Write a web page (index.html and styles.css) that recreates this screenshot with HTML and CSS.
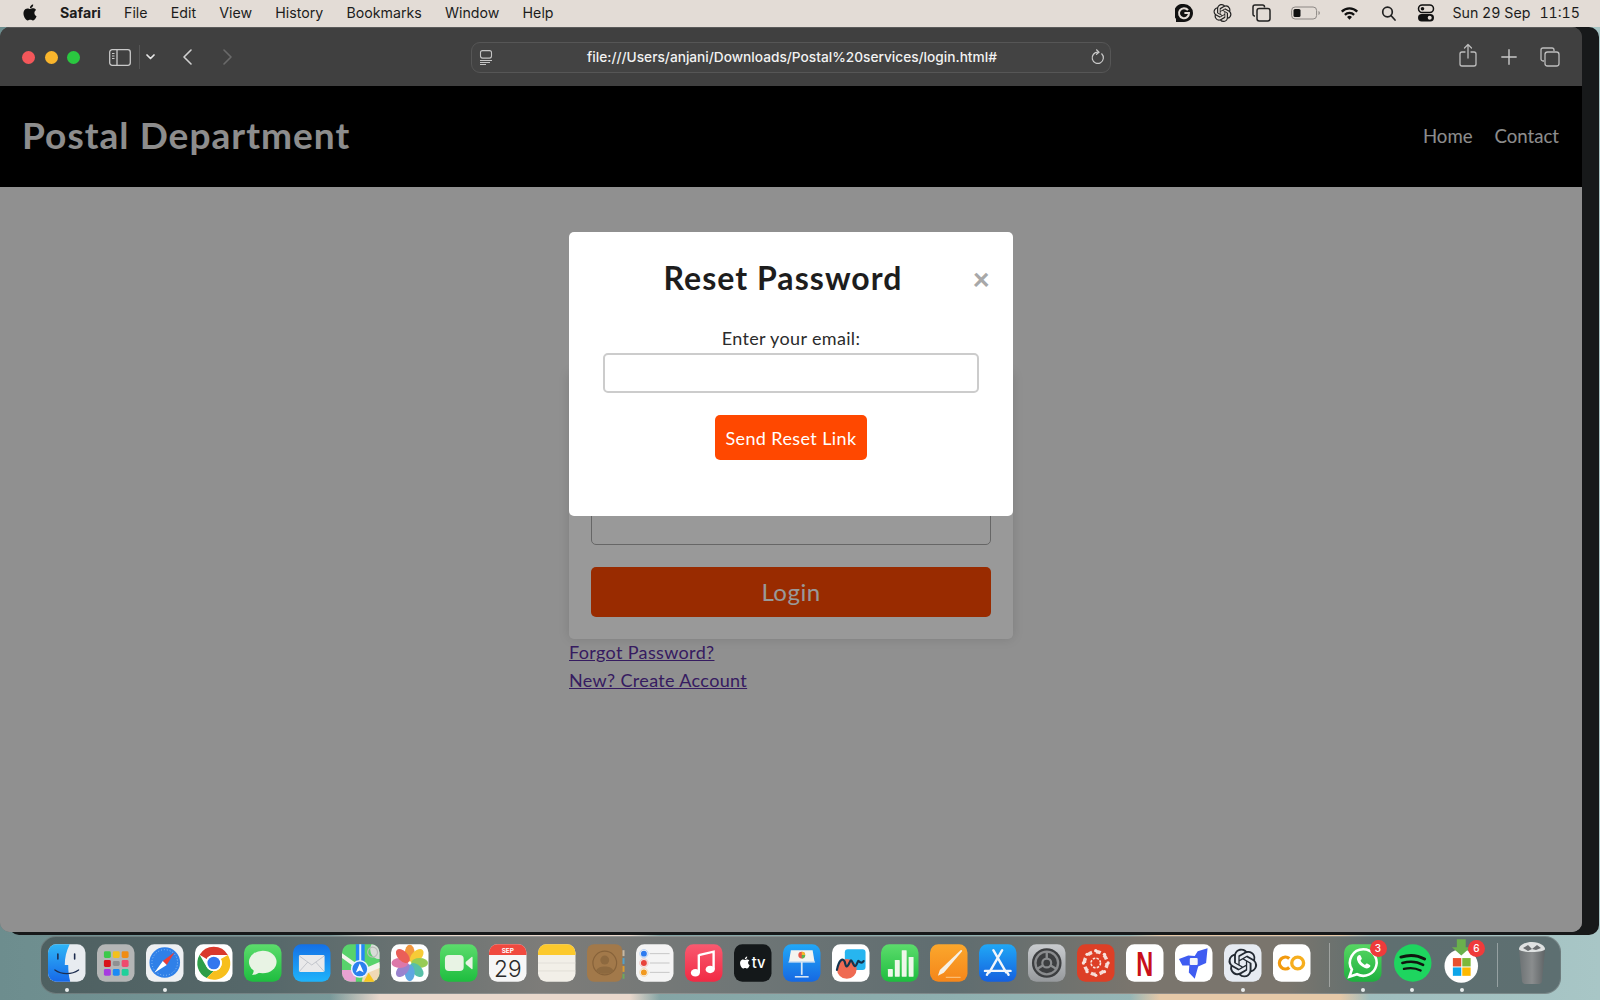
FILE: index.html
```html
<!DOCTYPE html>
<html lang="en">
<head>
<meta charset="utf-8">
<title>Postal Department</title>
<link rel="stylesheet" href="styles.css">
</head>
<body>
<div class="menubar">
  <svg class="apple" viewBox="0 0 24 24"><path d="M12.152 6.896c-.948 0-2.415-1.078-3.96-1.04-2.04.027-3.91 1.183-4.961 3.014-2.117 3.675-.546 9.103 1.519 12.09 1.013 1.454 2.208 3.09 3.792 3.039 1.52-.065 2.09-.987 3.935-.987 1.831 0 2.35.987 3.96.948 1.637-.026 2.676-1.48 3.676-2.948 1.156-1.688 1.636-3.325 1.662-3.415-.039-.013-3.182-1.221-3.22-4.857-.026-3.04 2.48-4.494 2.597-4.559-1.429-2.09-3.623-2.324-4.39-2.376-2-.156-3.675 1.09-4.61 1.09zM15.53 3.83c.843-1.012 1.4-2.427 1.245-3.83-1.207.052-2.662.805-3.532 1.818-.78.896-1.454 2.338-1.273 3.714 1.338.104 2.715-.688 3.559-1.701"/></svg>
  <nav class="menu">
    <span class="menu-app">Safari</span><span>File</span><span>Edit</span><span>View</span><span>History</span><span>Bookmarks</span><span>Window</span><span>Help</span>
  </nav>
  <div class="status">
    <svg class="st st-18" viewBox="0 0 18 18"><path d="M9 0a9 9 0 0 1 9 9c0 5-4 9-9 9H1v-3.2A9 9 0 0 1 9 0z" fill="#111"/><path d="M13 6.2A5 5 0 1 0 14 9H9.4" fill="none" stroke="#e3dcd6" stroke-width="2"/></svg>
    <svg class="st st-19" viewBox="0 0 24 24"><path fill="#222" d="M22.2819 9.8211a5.9847 5.9847 0 0 0-.5157-4.9108 6.0462 6.0462 0 0 0-6.5098-2.9A6.0651 6.0651 0 0 0 4.9807 4.1818a5.9847 5.9847 0 0 0-3.9977 2.9 6.0462 6.0462 0 0 0 .7427 7.0966 5.98 5.98 0 0 0 .511 4.9107 6.051 6.051 0 0 0 6.5146 2.9001A5.9847 5.9847 0 0 0 13.2599 24a6.0557 6.0557 0 0 0 5.7718-4.2058 5.9894 5.9894 0 0 0 3.9977-2.9001 6.0557 6.0557 0 0 0-.7475-7.0729zm-9.022 12.6081a4.4755 4.4755 0 0 1-2.8764-1.0408l.1419-.0804 4.7783-2.7582a.7948.7948 0 0 0 .3927-.6813v-6.7369l2.02 1.1686a.071.071 0 0 1 .038.052v5.5826a4.504 4.504 0 0 1-4.4945 4.4944zm-9.6607-4.1254a4.4708 4.4708 0 0 1-.5346-3.0137l.142.0852 4.783 2.7582a.7712.7712 0 0 0 .7806 0l5.8428-3.3685v2.3324a.0804.0804 0 0 1-.0332.0615L9.74 19.9502a4.4992 4.4992 0 0 1-6.1408-1.6464zM2.3408 7.8956a4.485 4.485 0 0 1 2.3655-1.9728V11.6a.7664.7664 0 0 0 .3879.6765l5.8144 3.3543-2.0201 1.1685a.0757.0757 0 0 1-.071 0l-4.8303-2.7865A4.504 4.504 0 0 1 2.3408 7.872zm16.5963 3.8558L13.1038 8.364 15.1192 7.2a.0757.0757 0 0 1 .071 0l4.8303 2.7913a4.4944 4.4944 0 0 1-.6765 8.1042v-5.6772a.79.79 0 0 0-.407-.667zm2.0107-3.0231l-.142-.0852-4.7735-2.7818a.7759.7759 0 0 0-.7854 0L9.409 9.2297V6.8974a.0662.0662 0 0 1 .0284-.0615l4.8303-2.7866a4.4992 4.4992 0 0 1 6.6802 4.66zM8.3065 12.863l-2.02-1.1638a.0804.0804 0 0 1-.038-.0567V6.0742a4.4992 4.4992 0 0 1 7.3757-3.4537l-.142.0805L8.704 5.459a.7948.7948 0 0 0-.3927.6813zm1.0976-2.3654l2.602-1.4998 2.6069 1.4998v2.9994l-2.5974 1.4997-2.6067-1.4997Z"/></svg>
    <svg class="st st-19" viewBox="0 0 19 18" fill="none" stroke="#222" stroke-width="1.5"><path d="M3 12H2.500A1.700 1.700 0 0 1 1 10.300V3a2 2 0 0 1 2-2h7.500A2 2 0 0 1 12.500 3v.5"/><rect x="5" y="4.500" width="13" height="12.500" rx="2.200"/></svg>
    <svg class="st st-29" viewBox="0 0 29 14"><rect x=".6" y="1" width="25" height="12" rx="3.500" fill="none" stroke="#8c8784" stroke-width="1"/><rect x="2.500" y="3" width="7" height="8" rx="1.500" fill="#111"/><path d="M27.500 5v4c.8-.3 1.300-1 1.300-2s-.5-1.700-1.300-2z" fill="#8c8784"/></svg>
    <svg class="st st-19" viewBox="0 0 20 15"><path d="M1 5.200a12.700 12.700 0 0 1 18 0l-1.700 1.800a10.200 10.200 0 0 0-14.600 0zM4.300 8.600a8 8 0 0 1 11.400 0L14 10.300a5.600 5.600 0 0 0-8 0zM7.400 11.800a3.700 3.700 0 0 1 5.200 0L10 14.500z" fill="#111"/></svg>
    <svg class="st st-18" viewBox="0 0 18 18" fill="none" stroke="#222" stroke-width="1.700"><circle cx="8.500" cy="8" r="4.800"/><path d="M12 11.500l4 4.500" stroke-linecap="round"/></svg>
    <svg class="st st-18" viewBox="0 0 18 18"><rect x="1.500" y="1" width="15" height="7.500" rx="3.700" fill="none" stroke="#111" stroke-width="1.500"/><circle cx="5.500" cy="4.700" r="1.800" fill="#111"/><rect x="1" y="10" width="16" height="7.500" rx="3.700" fill="#111"/><circle cx="12.700" cy="13.700" r="2" fill="#e3dcd6"/></svg>
    <div class="clock"><span>Sun 29 Sep</span><span>11:15</span></div>
  </div>
</div>

<div class="desktop">
  <div class="back-window"></div>
  <div class="window">
    <div class="toolbar">
      <div class="tb-left">
        <i class="light red"></i><i class="light yellow"></i><i class="light green"></i>
        <svg class="tb-sidebar" viewBox="0 0 22 17" fill="none" stroke="#c9c9c9" stroke-width="1.300"><rect x=".7" y=".7" width="20.600" height="15.600" rx="2.500"/><path d="M8 .7v15.600"/><path d="M3 4.500h2.500M3 7h2.500M3 9.500h2.500" stroke-width="1"/></svg>
        <i class="tb-divider"></i>
        <svg class="tb-chevron" viewBox="0 0 9 6" fill="none" stroke="#e8e8e8" stroke-width="1.700" stroke-linecap="round" stroke-linejoin="round"><path d="M1 1l3.500 3.500L8 1"/></svg>
        <svg class="tb-back" viewBox="0 0 10 16" fill="none" stroke="#d0d0d0" stroke-width="1.600" stroke-linecap="round" stroke-linejoin="round"><path d="M9 1L2 8l7 7"/></svg>
        <svg class="tb-forward" viewBox="0 0 10 16" fill="none" stroke="#6a6a6a" stroke-width="1.600" stroke-linecap="round" stroke-linejoin="round"><path d="M1 1l7 7-7 7"/></svg>
      </div>
      <div class="address">
        <svg class="addr-page" viewBox="0 0 14 15" fill="none" stroke="#c4c4c4" stroke-width="1.100"><rect x="1.500" y=".6" width="11" height="7.500" rx="2"/><path d="M1 10.500h12M1 12.500h10M1 14.500h6"/></svg>
        <span class="addr-url">file:///Users/anjani/Downloads/Postal%20services/login.html#</span>
        <svg class="addr-reload" viewBox="0 0 14 16" fill="none" stroke="#c9c9c9" stroke-width="1.200" stroke-linecap="round"><path d="M10.700 4.800A5.600 5.600 0 1 1 7 3.200"/><path d="M5.500 .8L8 3.200 5.500 5.300"/></svg>
      </div>
      <div class="tb-right">
        <svg class="tb-share" viewBox="0 0 18 24" fill="none" stroke="#bdbdbd" stroke-width="1.300" stroke-linecap="round" stroke-linejoin="round"><path d="M9 15V1.500M5.500 5L9 1.500 12.500 5"/><path d="M6 9H3a2 2 0 0 0-2 2v10a2 2 0 0 0 2 2h12a2 2 0 0 0 2-2V11a2 2 0 0 0-2-2h-3"/></svg>
        <svg class="tb-plus" viewBox="0 0 16 16" stroke="#c9c9c9" stroke-width="1.400" stroke-linecap="round"><path d="M8 .8v14.400M.8 8h14.400"/></svg>
        <svg class="tb-tabs" viewBox="0 0 20 20" fill="none" stroke="#bdbdbd" stroke-width="1.300"><path d="M4 14H3a2 2 0 0 1-2-2V3a2 2 0 0 1 2-2h9a2 2 0 0 1 2 2v1"/><rect x="5" y="5" width="14" height="14" rx="2.500"/></svg>
      </div>
    </div>

    <div class="page">
      <header class="site-header">
        <a class="brand">Postal Department</a>
        <nav class="site-nav"><a>Home</a><a>Contact</a></nav>
      </header>
      <main class="site-main">
        <form class="login-card">
          <div class="field"><label>Username</label><input class="login-input" type="text"></div>
          <div class="field"><label>Password</label><input class="login-input" type="password"></div>
          <button class="login-btn" type="button">Login</button>
        </form>
        <div class="links">
          <a href="#">Forgot Password?</a>
          <a href="#">New? Create Account</a>
        </div>
      </main>
      <div class="overlay">
        <div class="modal">
          <div class="modal-head">
            <h2>Reset Password</h2>
            <span class="modal-close">×</span>
          </div>
          <label class="modal-label">Enter your email:</label>
          <input class="modal-input" type="email">
          <button class="modal-btn" type="button">Send Reset Link</button>
        </div>
      </div>
    </div>
  </div>

  <div class="dock">
    <!-- Finder -->
    <div class="app running"><svg viewBox="0 0 38 38"><defs><linearGradient id="fb" x1="0" y1="0" x2="0" y2="1"><stop offset="0" stop-color="#2fb6f7"/><stop offset="1" stop-color="#1668e8"/></linearGradient></defs><rect width="38" height="38" rx="8.500" fill="#e8ecf0"/><path d="M8.500 0H22c-3.500 7-5 14-5 21h3.500c0 6 .5 11 2 17H8.500A8.500 8.500 0 0 1 0 29.500v-21A8.500 8.500 0 0 1 8.500 0z" fill="url(#fb)"/><path d="M10 10v5M27 10v5" stroke="#1d2d4f" stroke-width="1.600" stroke-linecap="round"/><path d="M7 26c7 5 17 5 24 0" fill="none" stroke="#1d2d4f" stroke-width="1.300" stroke-linecap="round"/></svg></div>
    <!-- Launchpad -->
    <div class="app"><svg viewBox="0 0 38 38"><rect width="38" height="38" rx="8.500" fill="#b4b6b6"/><g><rect x="7" y="7" width="7" height="7" rx="1.500" fill="#3bc94a"/><rect x="16" y="7" width="7" height="7" rx="1.500" fill="#f3c01c"/><rect x="25" y="7" width="7" height="7" rx="1.500" fill="#ef8c14"/><rect x="7" y="16" width="7" height="7" rx="1.500" fill="#d8121a"/><rect x="16" y="17" width="7" height="5" rx="1.500" fill="#8f9092"/><rect x="25" y="16" width="7" height="7" rx="1.500" fill="#ee4a6e"/><rect x="7" y="25" width="7" height="7" rx="1.500" fill="#a63be0"/><rect x="16" y="25" width="7" height="7" rx="1.500" fill="#1b8af5"/><rect x="25" y="25" width="7" height="7" rx="1.500" fill="#1fd09a"/></g></svg></div>
    <!-- Safari -->
    <div class="app running"><svg viewBox="0 0 38 38"><rect width="38" height="38" rx="8.500" fill="#eef0f2"/><circle cx="19" cy="18.500" r="15.500" fill="#2f80e8"/><circle cx="19" cy="18.500" r="13" fill="none" stroke="#8fc0f5" stroke-width="1" stroke-dasharray="1 2"/><path d="M29 8L21 21l-4-4z" fill="#ee3c35"/><path d="M8.500 29L17 17l4 4z" fill="#fff"/></svg></div>
    <!-- Chrome -->
    <div class="app"><svg viewBox="0 0 38 38"><rect width="38" height="38" rx="8.500" fill="#fff"/><path d="M19 2.500a16.500 16.500 0 0 1 14.300 8.300H19A8.200 8.200 0 0 0 11.800 15L4.700 10.700A16.500 16.500 0 0 1 19 2.500z" fill="#d9392c"/><path d="M4.700 10.700l7.100 12.400A8.200 8.200 0 0 0 19 27.200l-7.200 7A16.500 16.500 0 0 1 4.700 10.700z" fill="#2e9e48"/><path d="M33.300 10.800A16.500 16.500 0 0 1 11.800 34.200l7.200-7a8.200 8.200 0 0 0 7.200-12.200z" fill="#f7bf1c"/><circle cx="19" cy="19" r="8.200" fill="#fff"/><circle cx="19" cy="19" r="6.400" fill="#3477ee"/></svg></div>
    <!-- Messages -->
    <div class="app"><svg viewBox="0 0 38 38"><defs><linearGradient id="gm" x1="0" y1="0" x2="0" y2="1"><stop offset="0" stop-color="#5cdc6c"/><stop offset="1" stop-color="#1ebd3f"/></linearGradient></defs><rect width="38" height="38" rx="8.500" fill="url(#gm)"/><ellipse cx="19" cy="18" rx="14" ry="11.500" fill="#e8f3e4"/><path d="M10 25c0 3-1 5-2 6 3 0 6-1 8-3z" fill="#e8f3e4"/></svg></div>
    <!-- Mail -->
    <div class="app"><svg viewBox="0 0 38 38"><defs><linearGradient id="bm" x1="0" y1="0" x2="0" y2="1"><stop offset="0" stop-color="#1470e6"/><stop offset="1" stop-color="#1fb4fb"/></linearGradient></defs><rect width="38" height="38" rx="8.500" fill="url(#bm)"/><rect x="6" y="11" width="26" height="17" rx="1.500" fill="#e9e9ea"/><path d="M6.500 12L19 21l12.500-9M6.500 27.500L15 18M31.500 27.500L23 18" fill="none" stroke="#b8bcc4" stroke-width=".8"/></svg></div>
    <!-- Maps -->
    <div class="app"><svg viewBox="0 0 38 38"><rect width="38" height="38" rx="8.500" fill="#58d36c"/><path d="M0 26l14 0 0 12H8.500A8.500 8.500 0 0 1 0 29.500z" fill="#e9a2d1"/><path d="M22 28l16-8v9.500A8.500 8.500 0 0 1 29.500 38H20z" fill="#f0d9b5"/><path d="M22 38l5-9 6 9z" fill="#f7c61f"/><path d="M30 0a8.500 8.500 0 0 1 8 8.500V15c-4 0-8-3-9-7s0-6 1-8z" fill="#d9dcd8"/><circle cx="31" cy="8" r="5" fill="none" stroke="#b9bcb8" stroke-width="1.200"/><path d="M14 0h9v20h-9z" fill="#2687f5"/><path d="M17.500 0h2v20h-2z" fill="#eaf3ff"/><path d="M0 9l14 10v5L0 14zM38 18l-14 6v6l14-6z" fill="#f4f4ee"/><circle cx="18" cy="25" r="9" fill="#eaf3ff"/><circle cx="18" cy="25" r="7.500" fill="#2b80ee"/><path d="M18 19.500l4 9-4-1.800-4 1.800z" fill="#fff"/></svg></div>
    <!-- Photos -->
    <div class="app"><svg viewBox="0 0 38 38"><rect width="38" height="38" rx="8.500" fill="#fff"/><g transform="translate(19 19)" opacity=".88"><ellipse cy="-10" rx="5" ry="8.500" fill="#f28a24"/><ellipse cy="-10" rx="5" ry="8.500" fill="#f6c41c" transform="rotate(45)"/><ellipse cy="-10" rx="5" ry="8.500" fill="#8ac63e" transform="rotate(90)"/><ellipse cy="-10" rx="5" ry="8.500" fill="#42b89c" transform="rotate(135)"/><ellipse cy="-10" rx="5" ry="8.500" fill="#4a9ade" transform="rotate(180)"/><ellipse cy="-10" rx="5" ry="8.500" fill="#8c72c8" transform="rotate(225)"/><ellipse cy="-10" rx="5" ry="8.500" fill="#d9669e" transform="rotate(270)"/><ellipse cy="-10" rx="5" ry="8.500" fill="#e84a42" transform="rotate(315)"/></g></svg></div>
    <!-- FaceTime -->
    <div class="app"><svg viewBox="0 0 38 38"><rect width="38" height="38" rx="8.500" fill="url(#gm)"/><rect x="5" y="11" width="19" height="16" rx="4" fill="#e8f3e4"/><path d="M26 18l6-5c.6-.5 1-.2 1 .5v11c0 .7-.4 1-1 .5l-6-5z" fill="#e8f3e4"/></svg></div>
    <!-- Calendar -->
    <div class="app"><svg viewBox="0 0 38 38"><rect width="38" height="38" rx="8.500" fill="#f6f6f6"/><path d="M8.500 0h21A8.500 8.500 0 0 1 38 8.500V11H0V8.500A8.500 8.500 0 0 1 8.500 0z" fill="#f0493f"/><text x="19" y="8.600" class="cal-mon">SEP</text><text x="19" y="33" class="cal-day">29</text></svg></div>
    <!-- Notes -->
    <div class="app"><svg viewBox="0 0 38 38"><rect width="38" height="38" rx="8.500" fill="#f2efe8"/><path d="M8.500 0h21A8.500 8.500 0 0 1 38 8.500V11H0V8.500A8.500 8.500 0 0 1 8.500 0z" fill="#fcc92c"/><path d="M0 19h38M0 27h38" stroke="#dcd9d2" stroke-width=".7"/></svg></div>
    <!-- Contacts -->
    <div class="app"><svg viewBox="0 0 38 38"><rect width="36" height="38" rx="7" fill="#a2794a"/><rect x="36" y="6" width="2" height="6" fill="#c9b9a2"/><rect x="36" y="14" width="2" height="6" fill="#55a0c8"/><rect x="36" y="22" width="2" height="6" fill="#dd9a2c"/><rect x="36" y="30" width="2" height="5" fill="#6fa85c"/><circle cx="18" cy="19" r="12" fill="none" stroke="#86623a" stroke-width="1.200"/><circle cx="18" cy="16" r="4.500" fill="#8d693f"/><path d="M9 27c2-6 16-6 18 0-5 4-13 4-18 0z" fill="#8d693f"/></svg></div>
    <!-- Reminders -->
    <div class="app"><svg viewBox="0 0 38 38"><rect width="38" height="38" rx="8.500" fill="#f4f4f4"/><circle cx="8" cy="9.500" r="3" fill="#2e7cf0"/><circle cx="8" cy="19" r="3" fill="#e8433a"/><circle cx="8" cy="28.500" r="3" fill="#f29a1f"/><circle cx="8" cy="9.500" r="4.200" fill="none" stroke="#a9c6f0" stroke-width=".7"/><circle cx="8" cy="19" r="4.200" fill="none" stroke="#eeb0ac" stroke-width=".7"/><circle cx="8" cy="28.500" r="4.200" fill="none" stroke="#f2d09c" stroke-width=".7"/><path d="M14 9.500h20M14 19h20M14 28.500h20" stroke="#c6c6c6" stroke-width="1"/></svg></div>
    <!-- Music -->
    <div class="app"><svg viewBox="0 0 38 38"><defs><linearGradient id="mu" x1="0" y1="0" x2="0" y2="1"><stop offset="0" stop-color="#f95a70"/><stop offset="1" stop-color="#f12a44"/></linearGradient></defs><rect width="38" height="38" rx="8.500" fill="url(#mu)"/><path d="M14 11l15-3.500v18" fill="none" stroke="#fff" stroke-width="2.400"/><path d="M14 10.500V29" fill="none" stroke="#fff" stroke-width="2.400"/><ellipse cx="10.500" cy="29" rx="4.600" ry="3.800" fill="#fff"/><ellipse cx="25.500" cy="25.500" rx="4.600" ry="3.800" fill="#fff"/></svg></div>
    <!-- TV -->
    <div class="app"><svg viewBox="0 0 38 38"><rect width="38" height="38" rx="8.500" fill="#14181a"/><g transform="translate(5 12.500) scale(.5)"><path fill="#fff" d="M12.152 6.896c-.948 0-2.415-1.078-3.96-1.04-2.04.027-3.91 1.183-4.961 3.014-2.117 3.675-.546 9.103 1.519 12.09 1.013 1.454 2.208 3.09 3.792 3.039 1.52-.065 2.09-.987 3.935-.987 1.831 0 2.35.987 3.96.948 1.637-.026 2.676-1.48 3.676-2.948 1.156-1.688 1.636-3.325 1.662-3.415-.039-.013-3.182-1.221-3.22-4.857-.026-3.04 2.48-4.494 2.597-4.559-1.429-2.09-3.623-2.324-4.39-2.376-2-.156-3.675 1.09-4.61 1.09zM15.53 3.83c.843-1.012 1.4-2.427 1.245-3.83-1.207.052-2.662.805-3.532 1.818-.78.896-1.454 2.338-1.273 3.714 1.338.104 2.715-.688 3.559-1.701"/></g><text x="18" y="24.500" class="tv-text">tv</text></svg></div>
    <!-- Keynote -->
    <div class="app"><svg viewBox="0 0 38 38"><defs><linearGradient id="ky" x1="0" y1="0" x2="0" y2="1"><stop offset="0" stop-color="#22a8f8"/><stop offset="1" stop-color="#1668e2"/></linearGradient></defs><rect width="38" height="38" rx="8.500" fill="url(#ky)"/><path d="M8 6h22l2 12H6z" fill="#f4f4f0"/><circle cx="19" cy="11" r="3.500" fill="#e6584a"/><path d="M19 7.500a3.500 3.500 0 0 1 3.500 3.500H19z" fill="#f5b92a"/><path d="M19 11h3.500a3.500 3.500 0 0 1-3.500 3.500z" fill="#5ab552"/><path d="M5.500 18h27" stroke="#b9d6f2" stroke-width="1.400"/><path d="M19 18v13" stroke="#d8e6f4" stroke-width="1.800"/><path d="M12 33h14" stroke="#d8e6f4" stroke-width="1.600"/></svg></div>
    <!-- Freeform -->
    <div class="app"><svg viewBox="0 0 38 38"><rect width="38" height="38" rx="8.500" fill="#fff"/><rect x="13" y="5" width="21" height="21" rx="3" fill="#27b5ef"/><circle cx="15" cy="25" r="10" fill="#ef6a52"/><path d="M5 26c2-10 6-13 8-8 1 5 2 7 5 0 2-5 3 3 5 4s3-6 4-5 3 3 5 0" fill="none" stroke="#12354f" stroke-width="2.200" stroke-linecap="round"/></svg></div>
    <!-- Numbers -->
    <div class="app"><svg viewBox="0 0 38 38"><rect width="38" height="38" rx="8.500" fill="url(#gm)"/><rect x="7" y="25" width="5" height="8" rx=".5" fill="#eef7ea"/><rect x="14" y="16" width="5" height="17" rx=".5" fill="#eef7ea"/><rect x="21" y="6" width="5" height="27" rx=".5" fill="#eef7ea"/><rect x="28" y="13" width="5" height="20" rx=".5" fill="#eef7ea"/></svg></div>
    <!-- Pages -->
    <div class="app"><svg viewBox="0 0 38 38"><defs><linearGradient id="pg" x1="0" y1="0" x2="0" y2="1"><stop offset="0" stop-color="#fba72c"/><stop offset="1" stop-color="#f5861a"/></linearGradient></defs><rect width="38" height="38" rx="8.500" fill="url(#pg)"/><path d="M31 6c1-.8 2 .2 1.300 1.300L14 29l-6 3 2-6z" fill="#f6f0e4"/><path d="M16 33.500h15" stroke="#fbc98a" stroke-width="1"/></svg></div>
    <!-- App Store -->
    <div class="app"><svg viewBox="0 0 38 38"><defs><linearGradient id="as" x1="0" y1="0" x2="0" y2="1"><stop offset="0" stop-color="#20a8f6"/><stop offset="1" stop-color="#1560de"/></linearGradient></defs><rect width="38" height="38" rx="8.500" fill="url(#as)"/><path d="M14.500 6l13 22.500M23.500 6L10.500 28.500M6 27h26M8 31l2-3.500M30 31l-2-3.500" fill="none" stroke="#f2f6fb" stroke-width="2.400" stroke-linecap="round"/></svg></div>
    <!-- Settings -->
    <div class="app"><svg viewBox="0 0 38 38"><defs><linearGradient id="st" x1="0" y1="0" x2="0" y2="1"><stop offset="0" stop-color="#c9cccf"/><stop offset="1" stop-color="#96999c"/></linearGradient></defs><rect width="38" height="38" rx="8.500" fill="url(#st)"/><circle cx="19" cy="19" r="15" fill="#3c3e40"/><circle cx="19" cy="19" r="11.500" fill="none" stroke="#8a8c8e" stroke-width="2.400"/><circle cx="19" cy="19" r="4.500" fill="none" stroke="#8a8c8e" stroke-width="2.200"/><path d="M19 14.500V7.500M15 21.500l-6 3.500M23 21.500l6 3.500" stroke="#8a8c8e" stroke-width="2.400"/></svg></div>
    <!-- Canvas -->
    <div class="app"><svg viewBox="0 0 38 38"><rect width="38" height="38" rx="8.500" fill="#dd3f26"/><circle cx="19" cy="19" r="4.800" fill="none" stroke="#f8e4de" stroke-width="1.600" stroke-dasharray="2.500 1.300"/><g fill="#f8e4de"><circle cx="19" cy="6.500" r="1.700"/><circle cx="19" cy="31.500" r="1.700"/><circle cx="6.500" cy="19" r="1.700"/><circle cx="31.500" cy="19" r="1.700"/><circle cx="10.200" cy="10.200" r="1.700"/><circle cx="27.800" cy="10.200" r="1.700"/><circle cx="10.200" cy="27.800" r="1.700"/><circle cx="27.800" cy="27.800" r="1.700"/></g><circle cx="19" cy="19" r="11.500" fill="none" stroke="#f8e4de" stroke-width="3.500" stroke-dasharray="5 4" opacity=".95"/></svg></div>
    <!-- Netflix -->
    <div class="app"><svg viewBox="0 0 38 38"><rect width="38" height="38" rx="8.500" fill="#fff"/><text class="nf-text" transform="translate(19 32) scale(.66 1)">N</text></svg></div>
    <!-- Rocket -->
    <div class="app"><svg viewBox="0 0 38 38"><rect width="38" height="38" rx="8.500" fill="#fff"/><path d="M33 4l-1.500 15-8 3.500L20 35l-6-6.500.5-7H7.500L4 15l9.500-3.500 6.500.5 3-5z" fill="#3f5cf1"/><rect x="15" y="14" width="8" height="7" rx="1" fill="#f3f4f8"/></svg></div>
    <!-- ChatGPT -->
    <div class="app running"><svg viewBox="0 0 38 38"><rect width="38" height="38" rx="8.500" fill="#e6ebf2"/><g transform="translate(4.500 4.500) scale(1.210)"><path fill="#232a33" d="M22.2819 9.8211a5.9847 5.9847 0 0 0-.5157-4.9108 6.0462 6.0462 0 0 0-6.5098-2.9A6.0651 6.0651 0 0 0 4.9807 4.1818a5.9847 5.9847 0 0 0-3.9977 2.9 6.0462 6.0462 0 0 0 .7427 7.0966 5.98 5.98 0 0 0 .511 4.9107 6.051 6.051 0 0 0 6.5146 2.9001A5.9847 5.9847 0 0 0 13.2599 24a6.0557 6.0557 0 0 0 5.7718-4.2058 5.9894 5.9894 0 0 0 3.9977-2.9001 6.0557 6.0557 0 0 0-.7475-7.0729zm-9.022 12.6081a4.4755 4.4755 0 0 1-2.8764-1.0408l.1419-.0804 4.7783-2.7582a.7948.7948 0 0 0 .3927-.6813v-6.7369l2.02 1.1686a.071.071 0 0 1 .038.052v5.5826a4.504 4.504 0 0 1-4.4945 4.4944zm-9.6607-4.1254a4.4708 4.4708 0 0 1-.5346-3.0137l.142.0852 4.783 2.7582a.7712.7712 0 0 0 .7806 0l5.8428-3.3685v2.3324a.0804.0804 0 0 1-.0332.0615L9.74 19.9502a4.4992 4.4992 0 0 1-6.1408-1.6464zM2.3408 7.8956a4.485 4.485 0 0 1 2.3655-1.9728V11.6a.7664.7664 0 0 0 .3879.6765l5.8144 3.3543-2.0201 1.1685a.0757.0757 0 0 1-.071 0l-4.8303-2.7865A4.504 4.504 0 0 1 2.3408 7.872zm16.5963 3.8558L13.1038 8.364 15.1192 7.2a.0757.0757 0 0 1 .071 0l4.8303 2.7913a4.4944 4.4944 0 0 1-.6765 8.1042v-5.6772a.79.79 0 0 0-.407-.667zm2.0107-3.0231l-.142-.0852-4.7735-2.7818a.7759.7759 0 0 0-.7854 0L9.409 9.2297V6.8974a.0662.0662 0 0 1 .0284-.0615l4.8303-2.7866a4.4992 4.4992 0 0 1 6.6802 4.66zM8.3065 12.863l-2.02-1.1638a.0804.0804 0 0 1-.038-.0567V6.0742a4.4992 4.4992 0 0 1 7.3757-3.4537l-.142.0805L8.704 5.459a.7948.7948 0 0 0-.3927.6813zm1.0976-2.3654l2.602-1.4998 2.6069 1.4998v2.9994l-2.5974 1.4997-2.6067-1.4997Z"/></g></svg></div>
    <!-- Colab -->
    <div class="app"><svg viewBox="0 0 38 38"><rect width="38" height="38" rx="8.500" fill="#fff"/><path d="M16.500 14.500a6 6 0 1 0 0 9" fill="none" stroke="#f29a0e" stroke-width="3.400"/><circle cx="25" cy="19" r="6" fill="none" stroke="#f6ae1e" stroke-width="3.400"/></svg></div>

    <i class="dock-sep sep-a"></i>

    <!-- WhatsApp -->
    <div class="app running"><svg viewBox="0 0 38 38"><defs><linearGradient id="wa" x1="0" y1="0" x2="0" y2="1"><stop offset="0" stop-color="#57d763"/><stop offset="1" stop-color="#1eb03f"/></linearGradient></defs><rect width="38" height="38" rx="8.500" fill="url(#wa)"/><path d="M19.500 5a13.500 13.500 0 1 1-6.300 25.400L5.500 33l2.500-7.400A13.500 13.500 0 0 1 19.500 5z" fill="none" stroke="#fff" stroke-width="2.600"/><path d="M14.500 11.500c1-1 2-.8 2.500.4l1 2.300c.2.700-.2 1.200-1.200 2.300.8 2 2.500 3.600 4.500 4.400 1-1 1.500-1.600 2.200-1.300l2.300 1.100c1.100.6 1.200 1.400.4 2.400-1.200 1.400-3 1.800-5 1-4-1.400-7-4.400-8-8.300-.4-1.700.2-3.300 1.300-4.300z" fill="#fff"/></svg><span class="badge">3</span></div>
    <!-- Spotify -->
    <div class="app running app-spotify"><svg viewBox="0 0 38 38"><circle cx="19" cy="19" r="19" fill="#1ed55f"/><g fill="none" stroke="#10160f" stroke-linecap="round"><path d="M7 13c8-2.500 17-2 24 2" stroke-width="3"/><path d="M8.500 19c7-2 15-1.500 21 2" stroke-width="2.600"/><path d="M10 25c6-1.500 12-1 17 1.600" stroke-width="2.200"/></g></svg></div>
    <!-- Store -->
    <div class="app running app-store"><svg viewBox="0 0 38 38"><circle cx="17.500" cy="22" r="17" fill="#fff"/><rect x="9" y="14" width="8.500" height="8.500" fill="#e8502e"/><rect x="18.500" y="14" width="8.500" height="8.500" fill="#7db83a"/><rect x="9" y="23.500" width="8.500" height="8.500" fill="#0ea5e9"/><rect x="18.500" y="23.500" width="8.500" height="8.500" fill="#fdb900"/><path d="M13 -5h9v8h5L17.500 11.500 8 3h5z" fill="#6ab04c"/></svg><span class="badge">6</span></div>

    <i class="dock-sep sep-b"></i>

    <!-- Trash -->
    <div class="app app-trash"><svg viewBox="0 0 30 42"><defs><linearGradient id="tr" x1="0" y1="0" x2="1" y2="0"><stop offset="0" stop-color="#6d7274"/><stop offset=".5" stop-color="#8a8d8e"/><stop offset="1" stop-color="#5f6466"/></linearGradient></defs><path d="M2 7h26l-3 32c-.2 1.600-1.500 3-3 3H8c-1.500 0-2.800-1.400-3-3z" fill="url(#tr)"/><path d="M2 7c0-3 5-7 13-7s13 4 13 7c0 2-6 3-13 3S2 9 2 7z" fill="#dfe2e2"/><path d="M6 6l5-3 4 4 5-4 4 3-5 2-4-1-4 2z" fill="#6a6e70"/></svg></div>
  </div>
</div>
</body>
</html>
```
FILE: styles.css
```css
* { box-sizing: border-box; }
html, body { margin: 0; height: 100%; }
body {
  width: 1600px;
  height: 1000px;
  overflow: hidden;
  display: flex;
  flex-direction: column;
  font-family: "Lato", "Noto Sans", sans-serif;
}

/* macOS menu bar */
.menubar {
  height: 27px;
  flex: none;
  display: flex;
  align-items: center;
  padding: 0 20px 2px 22px;
  background: #e3dcd6;
  color: #1c1c1c;
  font: 400 14.200px "Inter", "Liberation Sans", sans-serif;
}
.apple { width: 16px; height: 17px; fill: #111; margin-right: 22px; }
.menu { display: flex; gap: 23.200px; }
.menu-app { font-weight: 700; }
.status { margin-left: auto; display: flex; align-items: center; gap: 20px; }
.st { display: block; height: 18px; flex: none; }
.st-18 { width: 18px; }
.st-19 { width: 19px; }
.st-29 { width: 29px; height: 14px; }
.clock { display: flex; gap: 9px; margin-left: -3px; font-variant-numeric: tabular-nums; }

/* Desktop */
.desktop {
  position: relative;
  flex: 1;
  display: flex;
  flex-direction: column;
  background:
    linear-gradient(90deg, rgba(120,150,150,0) 0 330px, #e9d8cc 380px 630px, rgba(143,176,176,0) 660px 1130px, #e6c9a8 1160px 1340px, rgba(143,176,176,0) 1370px),
    linear-gradient(90deg, #6d8d8e, #8fb0b0 60%, #a8c6c6);
}
.back-window {
  position: absolute;
  top: 0;
  right: 1px;
  width: 1590px;
  height: 908px;
  background: #17191a;
  border-radius: 10px;
}

/* Safari window */
.window {
  position: relative;
  width: 1582px;
  height: 905px;
  flex: none;
  display: flex;
  flex-direction: column;
  border-radius: 10px;
  overflow: hidden;
  background: #3f3f3f;
}
.toolbar {
  height: 59px;
  flex: none;
  display: flex;
  align-items: center;
  background: #404040;
  border-top: 1px solid #5a5a5a;
}
.tb-left { flex: 1; display: flex; align-items: center; padding-left: 22px; }
.light { width: 13px; height: 13px; border-radius: 50%; margin-right: 9.500px; }
.red { background: #f4575a; }
.yellow { background: #f9b52c; }
.green { background: #2ac840; margin-right: 0; }
.tb-sidebar { width: 22px; height: 17px; margin-left: 29px; }
.tb-divider { width: 1px; height: 24px; background: #555; margin-left: 8px; }
.tb-chevron { width: 9px; height: 6px; margin-left: 6px; }
.tb-back { width: 10px; height: 16px; margin-left: 27px; }
.tb-forward { width: 10px; height: 16px; margin-left: 31px; }
.address {
  width: 640px;
  height: 31px;
  flex: none;
  display: flex;
  align-items: center;
  border: 1px solid #565656;
  border-radius: 9px;
  background: #434343;
  padding: 0 5px 0 7px;
}
.addr-page { width: 14px; height: 15px; flex: none; }
.addr-url {
  flex: 1;
  text-align: center;
  color: #f2f2f2;
  font: 500 13.700px "Inter", "Liberation Sans", sans-serif;
  white-space: nowrap;
}
.addr-reload { width: 14px; height: 16px; flex: none; }
.tb-right { flex: 1; display: flex; align-items: center; justify-content: flex-end; gap: 23.500px; padding-right: 22px; }
.tb-share { width: 18px; height: 24px; margin-bottom: 4px; }
.tb-plus { width: 16px; height: 16px; }
.tb-tabs { width: 20px; height: 20px; }

/* Page inside the browser */
.page {
  position: relative;
  flex: 1;
  display: flex;
  flex-direction: column;
  background: #f0f0f0;
  overflow: hidden;
}
.site-header {
  height: 101px;
  flex: none;
  display: flex;
  align-items: center;
  justify-content: space-between;
  background: #000;
  padding: 0 23px 2px 22px;
  color: #ececec;
}
.brand { font-size: 37px; font-weight: 700; letter-spacing: 1.050px; margin-bottom: 2px; }
.site-nav { display: flex; gap: 22px; font-size: 18.600px; }
.site-main { width: 444px; margin: 185px auto 0; font-size: 18px; }
.login-card {
  background: #fff;
  border-radius: 5px;
  padding: 22px;
  box-shadow: 0 0 12px rgba(0,0,0,.12);
  display: flex;
  flex-direction: column;
}
.field { display: flex; flex-direction: column; margin-bottom: 23px; }
.field + .field { margin-top: -4px; margin-bottom: 22px; }
.field label { line-height: 26px; color: #333; }
.login-input { height: 40px; border: 1px solid #aaa; border-radius: 5px; background: #fff; }
.login-btn {
  height: 50px;
  border: 0;
  border-radius: 5px;
  background: #ff4800;
  color: #fff;
  font: 400 24px "Lato", sans-serif;
  letter-spacing: .5px;
  padding: 0 0 2px;
}
.links { display: flex; flex-direction: column; font-size: 18px; line-height: 27.500px; letter-spacing: .35px; align-items: flex-start; }
.links a { color: #5a2fa0; text-decoration: underline; }

/* Reset password modal */
.overlay {
  position: absolute;
  inset: 0;
  display: flex;
  justify-content: center;
  align-items: flex-start;
  padding-top: 146px;
  background: rgba(0,0,0,.4);
}
.modal {
  width: 444px;
  height: 284px;
  background: #fff;
  border-radius: 5px;
  padding: 24px 34px 0;
  display: flex;
  flex-direction: column;
  align-items: center;
}
.modal-head { position: relative; width: 100%; height: 48px; display: flex; justify-content: center; margin-bottom: 24px; }
.modal-head h2 {
  margin: 0 0 0 -16px;
  font-size: 32px;
  line-height: 44px;
  font-weight: 700;
  letter-spacing: 1.050px;
  color: #1d1d1d;
}
.modal-close {
  position: absolute;
  right: -11px;
  top: 4px;
  color: #a8a8a8;
  font: 900 30px/36px "Lato", sans-serif;
}
.modal-label { font-size: 18px; line-height: 20px; color: #2b2b2b; letter-spacing: .35px; margin-bottom: 5px; }
.modal-input { width: 376px; height: 40px; border: 2px solid #ccc; border-radius: 5px; background: #fff; flex: none; }
.modal-btn {
  margin-top: 22px;
  width: 152px;
  height: 45px;
  flex: none;
  border: 0;
  border-radius: 5px;
  background: #ff4800;
  color: #fff;
  font: 400 18px "Lato", sans-serif;
  letter-spacing: .4px;
  padding: 0;
}

/* Dock */
.dock {
  margin: 4px 0 0 39.500px;
  width: 1521px;
  height: 58px;
  flex: none;
  display: flex;
  gap: 11.500px;
  padding: 8px 0 0 7.500px;
  border: 1px solid rgba(255,255,255,.18);
  border-radius: 16px;
  background: linear-gradient(90deg, #4e6061 0, #56686a 15%, #7d7c79 33%, #6f7676 46%, #5f6d70 60%, #7a756d 72%, #7a756d 82%, #5f6f70 88%, #5d6f71 100%);
}
.app { position: relative; width: 37.500px; height: 38px; flex: none; margin-top: -1px; }
.app svg { display: block; width: 37.500px; height: 38px; overflow: visible; }
.running::after {
  content: "";
  position: absolute;
  left: 50%;
  top: 44px;
  width: 4px;
  height: 4px;
  margin-left: -2px;
  border-radius: 50%;
  background: #e8ecec;
}
.dock-sep { width: 1px; height: 44px; margin-top: -2px; background: rgba(255,255,255,.35); flex: none; }
.sep-a { margin-left: 7px; margin-right: 2.500px; }
.sep-b { margin-left: 4.500px; margin-right: 7.500px; }
.app-spotify { margin-left: .5px; }
.app-store { margin-left: 1px; }
.app-trash { width: 30px; height: 42px; margin-top: -3px; }
.app-trash svg { width: 30px; height: 42px; }
.badge {
  position: absolute;
  top: -4px;
  right: -5px;
  width: 17px;
  height: 17px;
  border-radius: 50%;
  background: #ef3b3b;
  color: #fff;
  font: 500 10px/17px "Inter", sans-serif;
  text-align: center;
}
.app-store .badge { right: -4px; }
.cal-mon { font: 700 6.500px "Inter", sans-serif; fill: #fff; text-anchor: middle; }
.cal-day { font: 300 23px "Inter", sans-serif; fill: #2a2a2a; text-anchor: middle; }
.tv-text { font: 500 15px "Inter", sans-serif; fill: #fff; }
.nf-text { font: 700 36px "Liberation Sans", sans-serif; fill: #c8101a; text-anchor: middle; }
```
